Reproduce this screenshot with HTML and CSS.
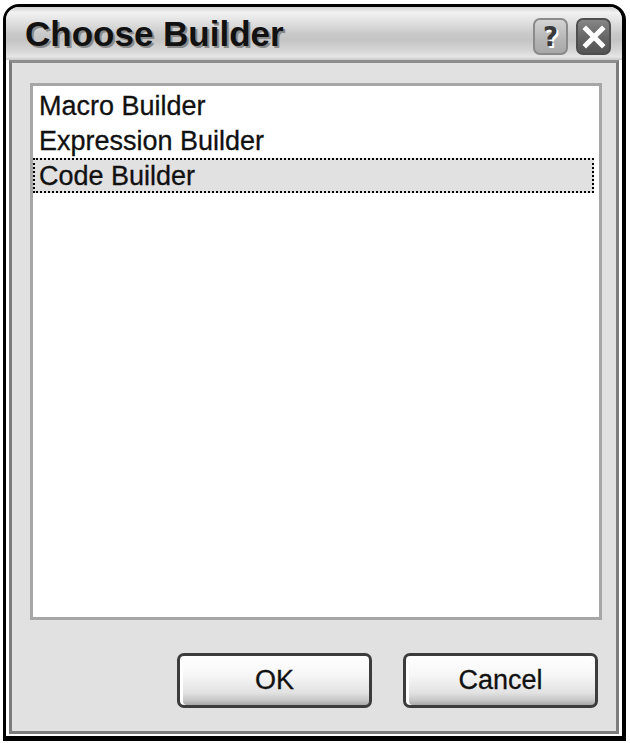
FILE: index.html
```html
<!DOCTYPE html>
<html>
<head>
<meta charset="utf-8">
<link rel="stylesheet" href="styles.css">
</head>
<body>
<div class="window">
  <div class="titlebar">
    <div class="title">Choose Builder</div>
    <div class="tb-buttons">
      <div class="tb-btn help"><span>?</span></div>
      <div class="tb-btn close">
        <svg width="24" height="24" viewBox="0 0 24 24"><path d="M4 4 L20 20 M20 4 L4 20" stroke="#fff" stroke-width="5" stroke-linecap="square"/></svg>
      </div>
    </div>
  </div>
  <div class="frame-outer">
    <div class="frame">
      <div class="list">
        <div class="item">Macro Builder</div>
        <div class="item">Expression Builder</div>
        <div class="item selected">Code Builder</div>
      </div>
      <div class="footer">
        <div class="btn">OK</div>
        <div class="btn">Cancel</div>
      </div>
    </div>
  </div>
</div>
</body>
</html>
```
FILE: styles.css
```css
html, body {
  margin: 0;
  padding: 0;
  background: #fff;
}
body {
  width: 630px;
  height: 743px;
  overflow: hidden;
}
.window {
  margin: 4px 0 0 3px;
  width: 623px;
  height: 737px;
  box-sizing: border-box;
  border-style: solid;
  border-color: #000;
  border-width: 3px 4px 5px 3px;
  border-radius: 16px 16px 0 0;
  display: flex;
  flex-direction: column;
  overflow: hidden;
  background: #fff;
}
.titlebar {
  height: 53px;
  flex: none;
  display: flex;
  align-items: flex-start;
  justify-content: space-between;
  padding: 0 11px 0 19px;
  background: linear-gradient(#cfcfcf 0, #f2f2f2 10%, #e4e4e4 25%, #c9c9c9 50%, #c4c4c4 62%, #d6d6d6 82%, #e6e6e6 94%, #c8c8c8 100%);
}
.title {
  font-family: "Liberation Sans", Arial, sans-serif;
  font-weight: bold;
  font-size: 35px;
  line-height: 54px;
  color: #111;
  text-shadow: 2px 2px 0 #8a8a8a;
}
.tb-buttons {
  display: flex;
  gap: 8px;
  padding-top: 11px;
}
.tb-btn {
  width: 35px;
  height: 37px;
  box-sizing: border-box;
  border-radius: 7px;
  display: flex;
  align-items: center;
  justify-content: center;
}
.tb-btn.help {
  border: 2px solid #8a8a8a;
  background: linear-gradient(#d4d4d4, #b4b4b4 60%, #a8a8a8);
}
.tb-btn.help span {
  font-family: "DejaVu Sans", sans-serif;
  font-weight: bold;
  font-size: 26px;
  line-height: 1;
  color: #3a3a3a;
  text-shadow: 2px 2px 0 #fff;
}
.tb-btn.close {
  border: 2px solid #4e4e4e;
  background: linear-gradient(#868686, #656565 55%, #555);
}
.frame-outer {
  flex: 1;
  display: flex;
  padding: 0 3px 2px 3px;
  background: #fff;
}
.frame {
  flex: 1;
  display: flex;
  flex-direction: column;
  border: 3px solid #7c7c7c;
  border-top-color: #8e8e8e;
  background: #e1e1e1;
}
.list {
  flex: 1;
  margin: 20px 14px 0 18px;
  border: 3px solid #a6a6a6;
  background: #fff;
  padding: 2px 5px 0 0;
}
.item {
  height: 35px;
  box-sizing: border-box;
  padding-left: 4px;
  font-family: "Liberation Sans", Arial, sans-serif;
  font-size: 27px;
  line-height: 33px;
  color: #111;
  -webkit-text-stroke: 0.3px #111;
  border: 2px solid transparent;
}
.item.selected {
  background: #e1e1e1;
  border: 2px dotted #000;
}
.footer {
  flex: none;
  display: flex;
  justify-content: flex-end;
  gap: 31px;
  padding: 33px 18px 23px 0;
}
.btn {
  width: 195px;
  height: 55px;
  box-sizing: border-box;
  border: 3px solid #3c3c3c;
  border-radius: 7px;
  background: linear-gradient(#ffffff 0, #f6f6f6 40%, #e2e2e2 75%, #c8c8c8 90%, #a8a8a8 100%);
  box-shadow: inset 3px 0 0 #fff;
  display: flex;
  align-items: center;
  justify-content: center;
  font-family: "Liberation Sans", Arial, sans-serif;
  font-size: 27px;
  color: #111;
  -webkit-text-stroke: 0.3px #111;
}
```
